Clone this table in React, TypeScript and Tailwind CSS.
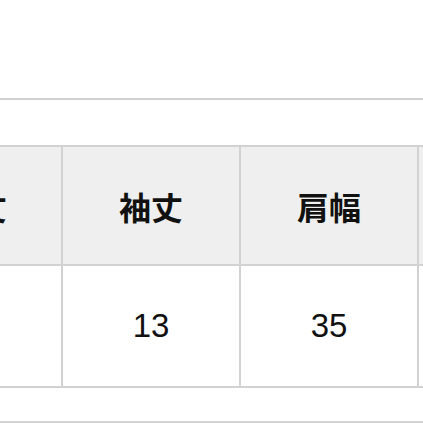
const headers = ["着丈", "袖丈", "肩幅", "身幅"];
const values = ["66", "13", "35", "48"];

export default function App() {
  return (
    <div className="w-[423px] h-[423px] overflow-hidden bg-white text-[#111]">
      <div className="h-[98px]" />
      <div className="h-[2px] bg-[#d2d2d2]" />
      <div className="h-[45px]" />

      <div className="ml-[-111px] w-[720px]">
        {/* header row */}
        <div className="flex border-t-2 border-b-2 border-[#d2d2d2] bg-[#efefef]">
          {headers.map((h, i) => (
            <div
              key={h}
              className={`${i === 0 ? "w-[174px]" : "w-[178px]"} shrink-0 h-[117px] flex items-center justify-center border-r-2 border-[#d2d2d2] text-[32px] font-bold [font-family:'Noto_Sans_CJK_JP',sans-serif]`}
            >
              {h}
            </div>
          ))}
        </div>

        {/* value row */}
        <div className="flex border-b-2 border-[#d2d2d2] bg-white">
          {values.map((v, i) => (
            <div
              key={i}
              className={`${i === 0 ? "w-[174px]" : "w-[178px]"} shrink-0 h-[120px] flex items-center justify-center border-r-2 border-[#d2d2d2] text-[33px] [font-family:'Liberation_Sans',Arial,sans-serif]`}
            >
              {v}
            </div>
          ))}
        </div>
      </div>

      <div className="h-[33px]" />
      <div className="h-[2px] bg-[#d2d2d2]" />
    </div>
  );
}
